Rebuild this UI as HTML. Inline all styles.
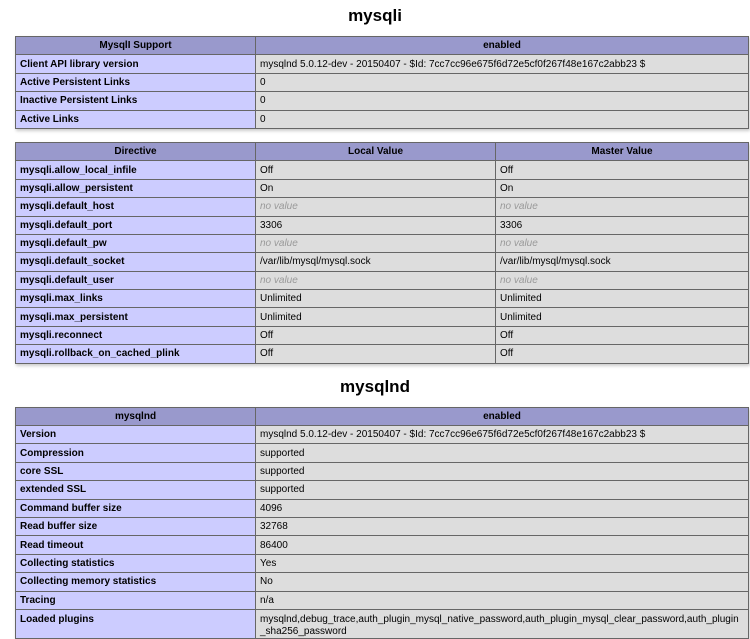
<!DOCTYPE html>
<html><head><meta charset="utf-8"><style>
body{margin:0;background:#fff;font-family:"Liberation Sans",Arial,sans-serif;color:#000;width:750px;overflow:hidden}
h2{font-size:17px;font-weight:bold;text-align:center;margin:0;height:21px;line-height:21px}
table{border-collapse:collapse;margin-left:15px;width:734px;table-layout:fixed;box-shadow:1px 2px 3px #ccc}
td,th{border:1px solid #666;font-size:10px;height:16.4px;padding:1px 4px 0 4px;line-height:12px;vertical-align:middle;overflow:hidden}
th{background:#9999cc;font-weight:bold;text-align:center}
td.e{background:#ccccff;font-weight:bold}
td.v{background:#dddddd}
i{color:#999}
</style></head><body>
<div style="height:5px"></div>
<h2>mysqli</h2>
<div style="height:10px"></div>
<table>
<colgroup><col style="width:240px"><col></colgroup>
<tr><th>MysqlI Support</th><th>enabled</th></tr>
<tr><td class="e">Client API library version</td><td class="v">mysqlnd 5.0.12-dev - 20150407 - $Id: 7cc7cc96e675f6d72e5cf0f267f48e167c2abb23 $</td></tr>
<tr><td class="e">Active Persistent Links</td><td class="v">0</td></tr>
<tr><td class="e">Inactive Persistent Links</td><td class="v">0</td></tr>
<tr><td class="e">Active Links</td><td class="v">0</td></tr>
</table>
<div style="height:13px"></div>
<table>
<colgroup><col style="width:240px"><col style="width:240px"><col></colgroup>
<tr><th>Directive</th><th>Local Value</th><th>Master Value</th></tr>
<tr><td class="e">mysqli.allow_local_infile</td><td class="v">Off</td><td class="v">Off</td></tr>
<tr><td class="e">mysqli.allow_persistent</td><td class="v">On</td><td class="v">On</td></tr>
<tr><td class="e">mysqli.default_host</td><td class="v"><i>no value</i></td><td class="v"><i>no value</i></td></tr>
<tr><td class="e">mysqli.default_port</td><td class="v">3306</td><td class="v">3306</td></tr>
<tr><td class="e">mysqli.default_pw</td><td class="v"><i>no value</i></td><td class="v"><i>no value</i></td></tr>
<tr><td class="e">mysqli.default_socket</td><td class="v">/var/lib/mysql/mysql.sock</td><td class="v">/var/lib/mysql/mysql.sock</td></tr>
<tr><td class="e">mysqli.default_user</td><td class="v"><i>no value</i></td><td class="v"><i>no value</i></td></tr>
<tr><td class="e">mysqli.max_links</td><td class="v">Unlimited</td><td class="v">Unlimited</td></tr>
<tr><td class="e">mysqli.max_persistent</td><td class="v">Unlimited</td><td class="v">Unlimited</td></tr>
<tr><td class="e">mysqli.reconnect</td><td class="v">Off</td><td class="v">Off</td></tr>
<tr><td class="e">mysqli.rollback_on_cached_plink</td><td class="v">Off</td><td class="v">Off</td></tr>
</table>
<div style="height:12px"></div>
<h2>mysqlnd</h2>
<div style="height:10px"></div>
<table>
<colgroup><col style="width:240px"><col></colgroup>
<tr><th>mysqlnd</th><th>enabled</th></tr>
<tr><td class="e">Version</td><td class="v">mysqlnd 5.0.12-dev - 20150407 - $Id: 7cc7cc96e675f6d72e5cf0f267f48e167c2abb23 $</td></tr>
<tr><td class="e">Compression</td><td class="v">supported</td></tr>
<tr><td class="e">core SSL</td><td class="v">supported</td></tr>
<tr><td class="e">extended SSL</td><td class="v">supported</td></tr>
<tr><td class="e">Command buffer size</td><td class="v">4096</td></tr>
<tr><td class="e">Read buffer size</td><td class="v">32768</td></tr>
<tr><td class="e">Read timeout</td><td class="v">86400</td></tr>
<tr><td class="e">Collecting statistics</td><td class="v">Yes</td></tr>
<tr><td class="e">Collecting memory statistics</td><td class="v">No</td></tr>
<tr><td class="e">Tracing</td><td class="v">n/a</td></tr>
<tr><td class="e" style="vertical-align:top;padding-top:4px">Loaded plugins</td><td class="v" style="padding-top:4px;word-break:break-all">mysqlnd,debug_trace,auth_plugin_mysql_native_password,auth_plugin_mysql_clear_password,auth_plugin_sha256_password</td></tr>
</table>
</body></html>
